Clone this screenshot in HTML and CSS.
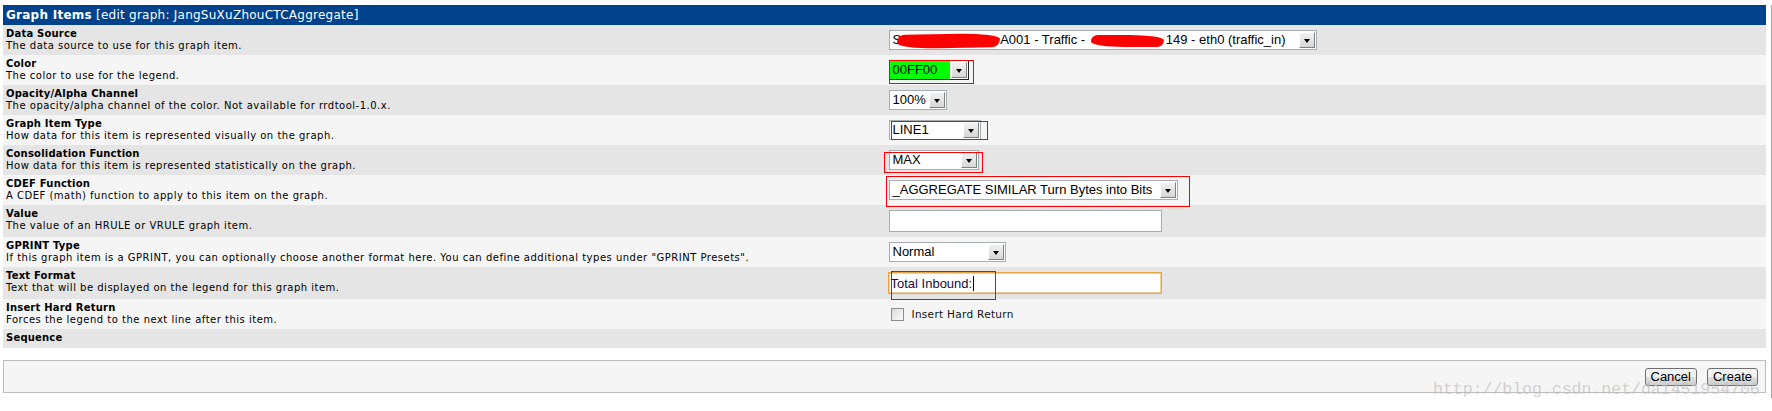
FILE: index.html
```html
<!DOCTYPE html>
<html lang="en">
<head>
  <meta charset="UTF-8" />
  <title>Graph Items [edit graph: JangSuXuZhouCTCAggregate]</title>
  <link rel="stylesheet" href="styles.css">
</head>
<body>
  <div class="page">
    <div class="panel">
      <div class="panel-header"><b>Graph Items</b> [edit graph: JangSuXuZhouCTCAggregate]</div>

      <div class="row dark">
        <div class="label"><b>Data Source</b><span>The data source to use for this graph item.</span></div>
        <div class="field">
          <span class="select w-source">
            <span class="select-text">S<i class="scribble s1"></i>A001 - Traffic - <i class="scribble s2"></i>149 - eth0 (traffic_in)</span>
            <span class="select-btn"></span>
          </span>
        </div>
      </div>

      <div class="row light">
        <div class="label"><b>Color</b><span>The color to use for the legend.</span></div>
        <div class="field">
          <span class="ctl">
            <span class="select w-color color-pick">
              <span class="select-text">00FF00</span>
              <span class="select-btn"></span>
            </span>
            <span class="mark m-color"></span>
          </span>
        </div>
      </div>

      <div class="row dark">
        <div class="label"><b>Opacity/Alpha Channel</b><span>The opacity/alpha channel of the color. Not available for rrdtool-1.0.x.</span></div>
        <div class="field">
          <span class="select w-alpha">
            <span class="select-text">100%</span>
            <span class="select-btn"></span>
          </span>
        </div>
      </div>

      <div class="row light">
        <div class="label"><b>Graph Item Type</b><span>How data for this item is represented visually on the graph.</span></div>
        <div class="field">
          <span class="ctl">
            <span class="select w-type">
              <span class="select-text">LINE1</span>
              <span class="select-btn"></span>
            </span>
            <span class="mark m-type"></span>
          </span>
        </div>
      </div>

      <div class="row dark">
        <div class="label"><b>Consolidation Function</b><span>How data for this item is represented statistically on the graph.</span></div>
        <div class="field">
          <span class="ctl">
            <span class="select w-cf">
              <span class="select-text">MAX</span>
              <span class="select-btn"></span>
            </span>
            <span class="mark m-cf"></span>
          </span>
        </div>
      </div>

      <div class="row light">
        <div class="label"><b>CDEF Function</b><span>A CDEF (math) function to apply to this item on the graph.</span></div>
        <div class="field">
          <span class="ctl">
            <span class="select w-cdef">
              <span class="select-text">_AGGREGATE SIMILAR Turn Bytes into Bits</span>
              <span class="select-btn"></span>
            </span>
            <span class="mark m-cdef"></span>
          </span>
        </div>
      </div>

      <div class="row dark">
        <div class="label"><b>Value</b><span>The value of an HRULE or VRULE graph item.</span></div>
        <div class="field">
          <span class="textbox"></span>
        </div>
      </div>

      <div class="row light">
        <div class="label"><b>GPRINT Type</b><span>If this graph item is a GPRINT, you can optionally choose another format here. You can define additional types under "GPRINT Presets".</span></div>
        <div class="field">
          <span class="select w-gprint">
            <span class="select-text">Normal</span>
            <span class="select-btn"></span>
          </span>
        </div>
      </div>

      <div class="row dark">
        <div class="label"><b>Text Format</b><span>Text that will be displayed on the legend for this graph item.</span></div>
        <div class="field">
          <span class="ctl">
            <span class="textbox focused">Total Inbound:<i class="caret"></i></span>
            <span class="mark m-text"></span>
          </span>
        </div>
      </div>

      <div class="row light">
        <div class="label"><b>Insert Hard Return</b><span>Forces the legend to the next line after this item.</span></div>
        <div class="field">
          <span class="check"></span><span class="check-label">Insert Hard Return</span>
        </div>
      </div>

      <div class="row dark short">
        <div class="label"><b>Sequence</b></div>
        <div class="field"></div>
      </div>
    </div>

    <div class="actions">
      <span class="btn">Cancel</span>
      <span class="btn">Create</span>
      <span class="watermark">http://blog.csdn.net/dai451954706</span>
    </div>
  </div>
</body>
</html>
```

FILE: styles.css
```css
:root {
  --header: #00438c;
  --row-dark: #e5e5e5;
  --row-light: #f5f5f5;
  --field-border: #a5acb2;
}

* {
  box-sizing: border-box;
}

body {
  margin: 0;
  padding: 5px 0 0 3px;
  background: #fff;
  color: #000;
  font-family: 'DejaVu Sans', Verdana, sans-serif;
}

.page {
  width: 1769px;
  padding: 0 5px 5px 0;
  border-right: 1px solid #a8a8a8;
}

.panel-header {
  background: var(--header);
  color: #fff;
  height: 20px;
  line-height: 20px;
  padding-left: 3px;
  font-size: 12px;
  letter-spacing: 0.25px;
}

.row {
  display: grid;
  grid-template-columns: 50% 50%;
}

.dark {
  background: var(--row-dark);
}

.light {
  background: var(--row-light);
}

.label {
  padding: 3px 3px 3px;
  font-size: 10px;
  line-height: 12px;
}

.label b,
.label span {
  display: block;
  white-space: nowrap;
}

.label b {
  letter-spacing: 0.2px;
}

.label span {
  letter-spacing: 0.5px;
}

.short .label {
  padding-bottom: 4px;
}

.field {
  display: flex;
  align-items: center;
  padding: 5px 4px;
}

/* fake select boxes */
.select {
  display: inline-flex;
  height: 20px;
  border: 1px solid var(--field-border);
  background: #fff;
  font-family: 'Liberation Sans', Arial, sans-serif;
  font-size: 13px;
}

.select-text {
  flex: 1;
  padding: 0 3px;
  line-height: 18px;
  white-space: nowrap;
  overflow: hidden;
}

.select-btn {
  position: relative;
  width: 16px;
  margin: 1px;
  background: linear-gradient(#f2f2f2, #d6d6d6);
  border: 1px solid #fff;
  border-right-color: #808080;
  border-bottom-color: #808080;
}

.select-btn::after {
  content: '';
  position: absolute;
  left: 4px;
  top: 6px;
  border-left: 3.5px solid transparent;
  border-right: 3.5px solid transparent;
  border-top: 4px solid #000;
}

.w-source { width: 428px; }
.w-color  { width: 80px; }
.w-alpha  { width: 58px; }
.w-type   { width: 92px; }
.w-cf     { width: 90px; }
.w-cdef   { width: 289px; }
.w-gprint { width: 117px; }

.color-pick {
  border-color: #222;
}

.color-pick .select-text {
  background: #00ff00;
}

.scribble {
  display: inline-block;
  vertical-align: middle;
  background: #ff0000;
  border-radius: 8px 40px 8px 40px / 7px 6px 8px 6px;
}

.s1 {
  width: 103px;
  height: 14px;
  margin: 0 0 0 -4px;
  transform: rotate(-1deg);
}

.s2 {
  width: 73px;
  height: 12px;
  margin: 0 2px;
}

/* red annotation boxes drawn over the controls */
.ctl {
  position: relative;
  display: inline-flex;
}

.mark {
  position: absolute;
  border: 1px solid #ff0000;
  pointer-events: none;
}

.m-color { left: 0;   top: 0;   width: 85px;  height: 24px; }
.m-type  { left: 2px; top: 1px; width: 97px;  height: 19px; }
.m-cf    { left: -5px; top: 2px; width: 99px; height: 21px; }
.m-cdef  { left: -3px; top: -4px; width: 304px; height: 31px; }
.m-text  { left: 2px; top: -1px; width: 105px; height: 29px; }

.textbox {
  display: inline-flex;
  align-items: center;
  width: 273px;
  height: 22px;
  padding: 0 2px;
  border: 1px solid var(--field-border);
  background: #fff;
  font-family: 'Liberation Sans', Arial, sans-serif;
  font-size: 13px;
  color: #1c0a3c;
}

.focused {
  width: 274px;
  margin-left: -1px;
  border-color: #e0a449;
  box-shadow: inset 0 0 0 1px #f2cf96;
}

.caret {
  display: inline-block;
  width: 1px;
  height: 15px;
  margin-left: 1px;
  background: #000;
}

.check {
  display: inline-block;
  width: 13px;
  height: 13px;
  margin-left: 2px;
  border: 1px solid #8c8c8c;
  background: linear-gradient(135deg, #dcdcdc, #fafafa);
}

.check-label {
  margin-left: 8px;
  font-size: 10.5px;
  letter-spacing: 0.3px;
  color: #111;
}

/* bottom button bar */
.actions {
  position: relative;
  display: flex;
  justify-content: flex-end;
  align-items: center;
  gap: 10px;
  height: 33px;
  margin-top: 12px;
  padding-right: 7px;
  border: 1px solid #bdbdbd;
  background: var(--row-light);
}

.btn {
  display: inline-block;
  height: 18px;
  padding: 0 5px;
  line-height: 16px;
  border: 1px solid #707070;
  border-radius: 3px;
  background: linear-gradient(#f3f3f3 45%, #dcdcdc 55%, #d0d0d0);
  font-family: 'Liberation Sans', Arial, sans-serif;
  font-size: 13px;
  color: #000;
}

.watermark {
  position: absolute;
  left: 1429px;
  top: 19px;
  font-family: 'Liberation Mono', 'Courier New', monospace;
  font-size: 16.5px;
  color: rgba(190, 190, 190, 0.7);
  white-space: nowrap;
  pointer-events: none;
}
```
